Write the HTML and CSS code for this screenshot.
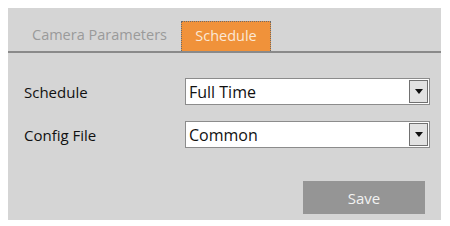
FILE: index.html
```html
<!DOCTYPE html>
<html lang="en">
<head>
    <meta charset="UTF-8">
    <title>Schedule</title>
    <link rel="stylesheet" href="styles.css">
</head>
<body>
    <div class="panel">
        <div class="tabs">
            <div class="tab">Camera Parameters</div>
            <div class="tab active">Schedule</div>
        </div>
        <div class="form">
            <div class="row">
                <label>Schedule</label>
                <div class="select">
                    <span class="value">Full Time</span>
                    <span class="arrow"></span>
                </div>
            </div>
            <div class="row">
                <label>Config File</label>
                <div class="select">
                    <span class="value">Common</span>
                    <span class="arrow"></span>
                </div>
            </div>
        </div>
        <div class="actions">
            <button class="save">Save</button>
        </div>
    </div>
</body>
</html>
```
FILE: styles.css
```css
body {
    margin: 0;
    background: #ffffff;
    font-family: "Open Sans", "Noto Sans", sans-serif;
}
.panel {
    margin: 8px;
    width: 433px;
    height: 212px;
    background: #d5d5d5;
    display: flex;
    flex-direction: column;
}
.tabs {
    display: flex;
    align-items: flex-end;
    padding: 13px 0 0 14px;
    border-bottom: 2px solid #8a8a8a;
}
.tab {
    height: 30px;
    line-height: 28px;
    padding: 0 10px;
    font-size: 14.5px;
    color: #9a9a9a;
    box-sizing: border-box;
    white-space: nowrap;
}
.tab.active {
    background: #f0923a;
    color: #fbe8d6;
    border: 1px dotted #6a6a6a;
    border-bottom: none;
    width: 90px;
    padding: 0;
    text-align: center;
    margin-left: 4px;
}
.form {
    padding: 25px 11px 0 16px;
    display: flex;
    flex-direction: column;
    gap: 16px;
}
.row {
    display: flex;
    align-items: center;
}
.row label {
    width: 161px;
    font-size: 15px;
    color: #111;
}
.select {
    flex: 1;
    height: 27px;
    display: flex;
    align-items: center;
    background: #fff;
    border: 1px solid #8c8c8c;
    box-sizing: border-box;
}
.select .value {
    flex: 1;
    padding-left: 3px;
    font-size: 16px;
    color: #111;
}
.select .arrow {
    width: 19px;
    height: 23px;
    margin-right: 1px;
    background: #e2e2e2;
    border: 1px solid #707070;
    box-sizing: border-box;
    display: flex;
    align-items: center;
    justify-content: center;
}
.select .arrow::after {
    content: "";
    border-left: 4px solid transparent;
    border-right: 4px solid transparent;
    border-top: 5px solid #111;
}
.actions {
    display: flex;
    justify-content: flex-end;
    padding: 33px 16px 0 0;
}
.save {
    width: 122px;
    height: 33px;
    border: none;
    background: #959595;
    color: #f2f2f2;
    font-family: inherit;
    font-size: 15px;
}
```
